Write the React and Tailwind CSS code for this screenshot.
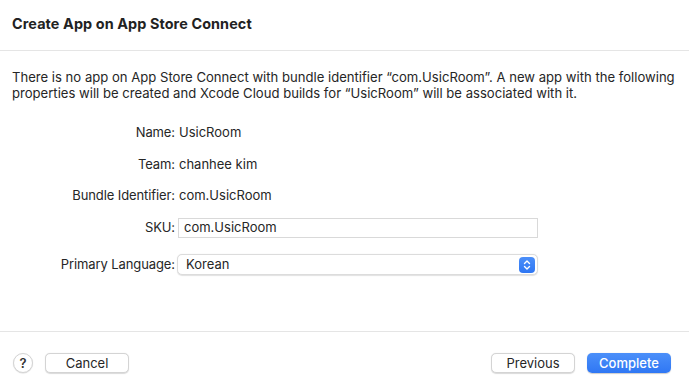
import React from 'react'

function Row({ label, className, children }) {
  return (
    <div className={`flex items-center ${className}`}>
      <div className="w-[176px] pr-[1px] text-right text-[#262626] tracking-[-0.1px]">{label}</div>
      <div className="flex-1 pl-[3px]">{children}</div>
    </div>
  )
}

function Button({ children, className }) {
  return (
    <button
      className={`h-[20px] w-[84px] rounded-[5px] bg-white text-[13px] leading-none text-[#262626] border border-[#d4d4d4] shadow-[0_0.5px_1px_rgba(0,0,0,0.15)] ${className || ''}`}
    >
      {children}
    </button>
  )
}

export default function App() {
  return (
    <div
      className="w-[689px] h-[391px] bg-white flex flex-col text-[13px] text-[#262626]"
      style={{ fontFamily: 'Inter, "Liberation Sans", sans-serif' }}
    >
      {/* Header */}
      <div className="h-[51px] shrink-0 border-b border-[#e5e5e5] px-3 pb-[2px] flex items-center">
        <h1 className="text-[14.4px] font-bold text-[#222] tracking-[0.1px]">Create App on App Store Connect</h1>
      </div>

      {/* Body */}
      <div className="flex-1">
        <p className="px-3 pt-[18px] leading-[16px] text-[13.1px] whitespace-nowrap">
          There is no app on App Store Connect with bundle identifier “com.UsicRoom”. A new app with the following
          <br />
          properties will be created and Xcode Cloud builds for “UsicRoom” will be associated with it.
        </p>

        <Row label="Name:" className="mt-[24px] h-[16px]">UsicRoom</Row>
        <Row label="Team:" className="mt-[16px] h-[16px]">chanhee kim</Row>
        <Row label="Bundle Identifier:" className="mt-[15px] h-[16px]">com.UsicRoom</Row>

        <Row label="SKU:" className="mt-[14px] h-[20px]">
          <div className="w-[360px] h-[20px] -ml-[1px] border border-[#d9d9d9] bg-white px-[5px] flex items-center">
            com.UsicRoom
          </div>
        </Row>

        <Row label="Primary Language:" className="mt-[16px] h-[21px]">
          <div className="w-[361px] h-[21px] -ml-[2px] rounded-[5px] border border-[#dcdcdc] bg-white shadow-[0_0.5px_1px_rgba(0,0,0,0.12)] flex items-center justify-between pl-[8px] pr-[2px]">
            <span>Korean</span>
            <span className="w-[16px] h-[16px] rounded-[4px] bg-gradient-to-b from-[#4b8ff9] to-[#2e76f3] flex items-center justify-center">
              <svg width="8" height="12" viewBox="0 0 8 12" fill="none" stroke="white" strokeWidth="1.4" strokeLinecap="round" strokeLinejoin="round">
                <path d="M1.5 4.5 4 2 6.5 4.5" />
                <path d="M1.5 7.5 4 10 6.5 7.5" />
              </svg>
            </span>
          </div>
        </Row>
      </div>

      {/* Footer */}
      <div className="h-[60px] shrink-0 border-t border-[#e5e5e5] px-[13px] pt-[21px] flex items-start">
        <button className="w-[20px] h-[20px] rounded-full bg-white border border-[#d4d4d4] shadow-[0_0.5px_1px_rgba(0,0,0,0.15)] flex items-center justify-center text-[13px] font-semibold text-[#333] leading-none">
          ?
        </button>
        <Button className="ml-[12px]">Cancel</Button>
        <div className="flex-1" />
        <Button>Previous</Button>
        <button className="ml-[12px] mr-[5px] h-[20px] w-[84px] rounded-[5px] bg-gradient-to-b from-[#4b8ff9] to-[#2f77f4] text-white text-[13px] font-medium leading-none shadow-[0_0.5px_1px_rgba(0,0,0,0.2)]">
          Complete
        </button>
      </div>
    </div>
  )
}
